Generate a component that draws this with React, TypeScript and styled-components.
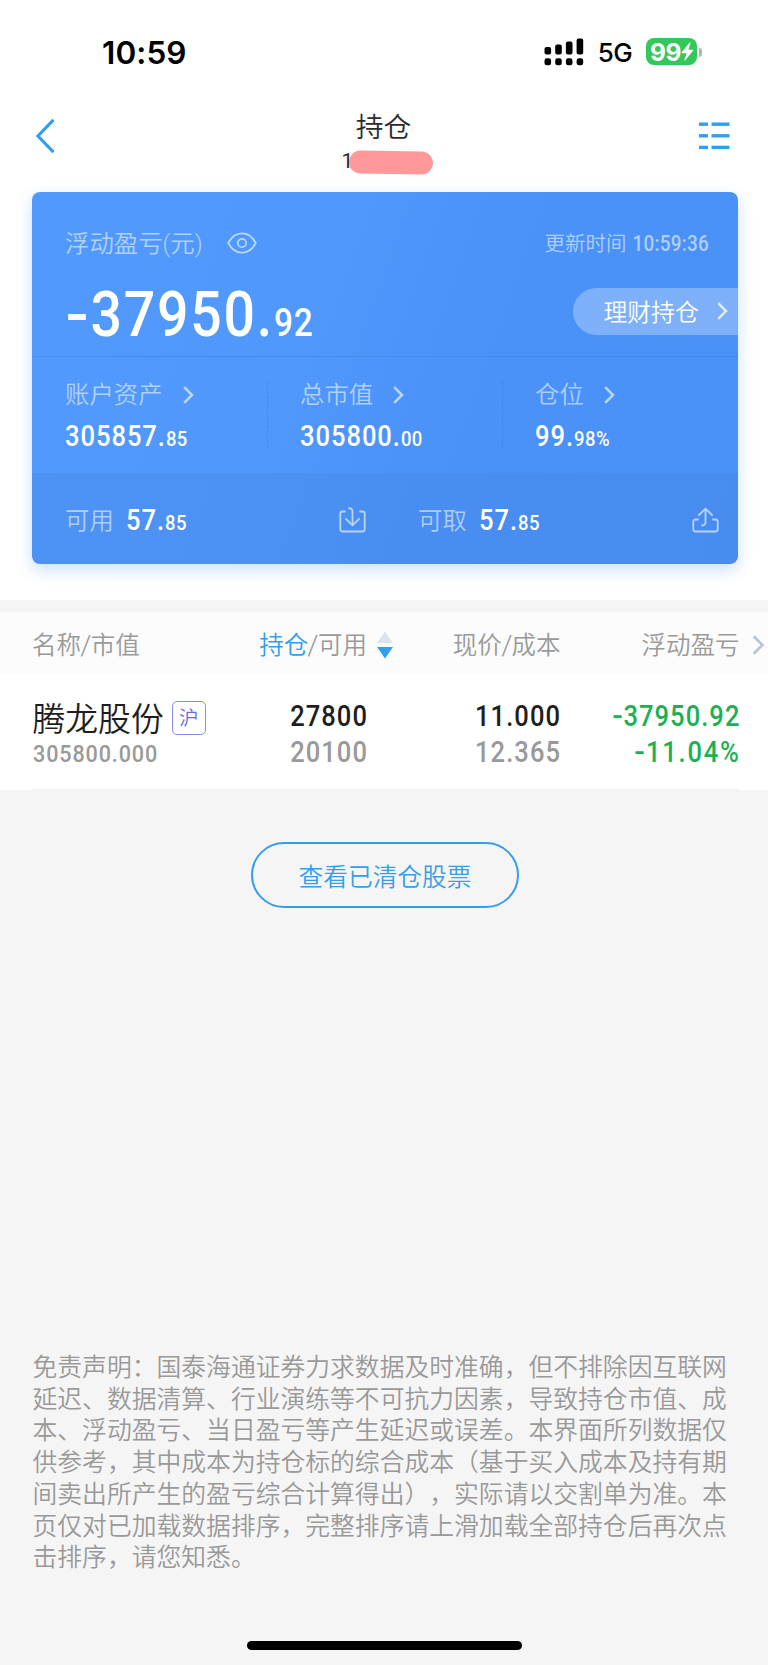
import React from 'react';
import styled, { createGlobalStyle, css } from 'styled-components';

const Global = createGlobalStyle`
  *, *::before, *::after { box-sizing: border-box; }
  body {
    margin: 0;
    background: #f5f5f5;
    font-family: Roboto, "Noto Sans CJK SC", sans-serif;
    font-weight: 350;
    text-spacing-trim: space-all;
  }
  svg { display: block; flex: none; }
`;

/* Narrow, evenly spaced numerals. */
const narrow = (origin: 'left' | 'right') => css`
  font-weight: 500;
  transform: scaleX(0.88);
  transform-origin: ${origin} center;
  white-space: nowrap;
`;

const Screen = styled.main`
  width: 768px;
  height: 1665px;
  display: flex;
  flex-direction: column;
  background: #f5f5f5;
  overflow: hidden;
`;

const Top = styled.section`
  height: 600px;
  flex: none;
  background: #fff;
`;

const StatusBar = styled.header`
  height: 100px;
  display: flex;
  align-items: center;
  padding: 4px 66px 0 102px;
  font-family: Inter, sans-serif;
  color: #000;
`;

const Clock = styled.span`
  flex: 1;
  font-size: 31.5px;
  font-weight: 600;
  letter-spacing: 0.1px;
`;

const Network = styled.span`
  margin: 0 14px 0 14px;
  font-size: 26px;
  font-weight: 450;
  letter-spacing: -0.6px;
`;

const Battery = styled.span`
  width: 51px;
  height: 27px;
  display: flex;
  align-items: center;
  margin-top: -1px;
  padding-left: 4px;
  border-radius: 8px;
  background: #34c759;
  color: #fff;
  font-size: 24.5px;
  font-weight: 700;
  letter-spacing: -0.4px;
`;

const BatteryTip = styled.span`
  width: 3px;
  height: 9px;
  margin-left: 2px;
  border-radius: 0 4px 4px 0;
  background: #b4b4b4;
`;

const NavBar = styled.nav`
  height: 92px;
  display: grid;
  grid-template-columns: 100px 1fr 100px;
  padding: 0 38px 0 36px;
`;

const NavIcon = styled.button<{ $end?: boolean }>`
  height: 71px;
  display: flex;
  align-items: center;
  justify-content: ${(p) => (p.$end ? 'flex-end' : 'flex-start')};
  padding: 0;
  border: 0;
  background: none;
`;

const TitleBlock = styled.div`
  display: flex;
  flex-direction: column;
  align-items: center;
  color: #2b2b2b;
`;

const Title = styled.h1`
  margin: 10px 0 0 1px;
  font-size: 27.8px;
  font-weight: 350;
  line-height: 36px;
`;

const Account = styled.div`
  display: flex;
  align-items: center;
  height: 30px;
  margin-left: 9px;
  font-size: 21px;
  font-weight: 400;
`;

const Redaction = styled.span`
  width: 84px;
  height: 23px;
  margin: 3px 0 0 -4px;
  border-radius: 12px;
  background: #ff9898;
  transform: rotate(0.8deg);
`;

const Card = styled.section`
  width: 705.5px;
  height: 372px;
  margin-left: 32px;
  display: flex;
  flex-direction: column;
  border-radius: 8px;
  overflow: hidden;
  background: linear-gradient(110deg, #5199fd 0%, #5098fc 38%, #4a91f8 62%, #4990f7 100%);
  box-shadow: 0 6px 15px rgba(73, 144, 247, 0.28);
  color: #fff;
`;

const Summary = styled.div`
  height: 165px;
  border-bottom: 1px solid rgba(50, 110, 200, 0.28);
`;

const SummaryHead = styled.div`
  height: 65px;
  display: flex;
  align-items: center;
  padding: 38px 28px 0 33px;
`;

const Label = styled.span`
  font-size: 24.4px;
  line-height: 32px;
  color: rgba(255, 255, 255, 0.56);
  white-space: nowrap;
`;

const EyeSlot = styled.span`
  flex: 1;
  padding: 0 0 1px 24px;
`;

const Updated = styled.span`
  margin-top: 1px;
  font-size: 20.5px;
  line-height: 30px;
  color: rgba(255, 255, 255, 0.58);
  white-space: nowrap;
`;

const UpdatedTime = styled.span`
  display: inline-block;
  margin-left: -9px;
  font-size: 21.5px;
  letter-spacing: 0.3px;
  ${narrow('right')}
`;

const SummaryBody = styled.div`
  display: flex;
  justify-content: space-between;
  align-items: center;
  height: 99px;
  padding: 16px 0 0 32px;
`;

const Figure = styled.span<{ $size: number; $ls: number }>`
  display: inline-block;
  font-size: ${(p) => p.$size}px;
  line-height: 1;
  letter-spacing: ${(p) => p.$ls}px;
  ${narrow('left')}
`;

const Sign = styled.span`
  display: inline-block;
  width: 0.476em;
  letter-spacing: 0;
  text-align: center;
  transform: scaleX(1.23);
`;

const Fraction = styled.small<{ $size: number; $ls: number }>`
  font-size: ${(p) => p.$size}px;
  letter-spacing: ${(p) => p.$ls}px;
`;

const WealthButton = styled.button`
  width: 165px;
  height: 47px;
  display: flex;
  align-items: center;
  justify-content: space-between;
  margin-bottom: 7px;
  padding: 0 10px 0 31px;
  border: 0;
  border-radius: 24px 0 0 24px;
  background: rgba(255, 255, 255, 0.29);
  color: #fff;
  font: 350 23.8px Roboto, "Noto Sans CJK SC", sans-serif;
  span { margin-top: -1px; }
`;

const Stats = styled.div`
  height: 116px;
  display: grid;
  grid-template-columns: 236px 235px 1fr;
  padding-top: 24px;
`;

const Stat = styled.div<{ $divided?: boolean }>`
  height: 67px;
  padding-left: 33px;
  border-right: ${(p) => (p.$divided ? '1px dashed rgba(50, 110, 200, 0.3)' : '0')};
  &:nth-child(n + 2) { padding-left: 32px; }
`;

const StatHead = styled.div`
  height: 28px;
  display: flex;
  align-items: center;
  gap: 20px;
  margin-bottom: 13px;
`;

const Cash = styled.div`
  flex: 1;
  display: grid;
  grid-template-columns: 353px 1fr;
  background: rgba(67, 125, 205, 0.2);
`;

const CashItem = styled.div`
  display: flex;
  align-items: center;
  gap: 12px;
  padding: 4px 19px 0 33px;
  svg { margin: 0 0 2px auto; }
`;

const TableHead = styled.div`
  height: 62px;
  flex: none;
  display: grid;
  grid-template-columns: 259px 108px 193.5px 179px 1fr;
  align-items: center;
  margin-top: 12px;
  background: #fcfcfc;
  color: #999;
  font-size: 24.5px;
  line-height: 32px;
  white-space: nowrap;
  padding-top: 5px;
`;

const HeadCell = styled.span<{ $align?: string }>`
  display: flex;
  align-items: center;
  justify-content: ${(p) => p.$align || 'flex-start'};
  padding-left: ${(p) => (p.$align ? 0 : 32)}px;
  em { font-style: normal; color: #2f9fee; }
`;

const Slash = styled.i`
  font-style: normal;
  transform: scale(1.15);
`;

const SortIcon = styled.svg`
  margin: 0 -26px 2px 10px;
`;

const MoreSlot = styled(HeadCell)`
  padding: 0 3px 2px 0;
`;

const HoldingRow = styled.div`
  height: 116px;
  flex: none;
  display: grid;
  grid-template-columns: 259px 109px 193px 179.5px 1fr;
  padding-top: 24px;
  background: linear-gradient(#f0f0f0, #f0f0f0) 32px 100% / 706px 1px no-repeat #fff;
`;

const NameCell = styled.div`
  padding-left: 32.5px;
`;

const StockName = styled.div`
  height: 40px;
  display: flex;
  align-items: center;
  gap: 8px;
  color: #1e1e1e;
  font-size: 32.8px;
  line-height: 40px;
  white-space: nowrap;
  padding-top: 4px;
`;

const Market = styled.span`
  width: 34px;
  height: 34px;
  margin-top: -4px;
  border: 1px solid #8d8bea;
  border-radius: 5px;
  color: #6b69e0;
  font-size: 19.5px;
  line-height: 33px;
  text-align: center;
`;

const MarketValue = styled.div`
  font-size: 24.5px;
  line-height: 32px;
  letter-spacing: 1px;
  color: #999;
  ${narrow('left')}
`;

const ValueCell = styled.div<{ $color?: string }>`
  text-align: right;
  font-size: 29px;
  line-height: 36px;
  letter-spacing: 1.2px;
  color: ${(p) => p.$color || '#1e1e1e'};
  ${narrow('right')}
`;

const SubValue = styled.div<{ $muted?: boolean; $ls?: number }>`
  letter-spacing: ${(p) => p.$ls ?? 1.2}px;
  color: ${(p) => (p.$muted ? '#999' : 'inherit')};
`;

const ClearedButton = styled.button`
  width: 268px;
  height: 66px;
  flex: none;
  align-self: center;
  margin: 52px 0 0 2px;
  padding: 0;
  border: 2px solid #359eeb;
  border-radius: 33px;
  background: transparent;
  color: #359eeb;
  font: 350 24.7px Roboto, "Noto Sans CJK SC", sans-serif;
`;

const Disclaimer = styled.p`
  margin: auto 0 0 32.5px;
  font-size: 24.8px;
  line-height: 31.7px;
  color: #999;
  white-space: nowrap;
`;

const HomeIndicator = styled.div`
  width: 275px;
  height: 9px;
  flex: none;
  align-self: center;
  margin: 67px 0 15px;
  border-radius: 5px;
  background: #000;
`;

const Signed = ({ text }: { text: string }) =>
  text.startsWith('-') ? <><Sign>-</Sign>{text.slice(1)}</> : <>{text}</>;

const Amount = ({ value, large }: { value: string; large?: boolean }) => {
  const [whole, part] = value.split('.');
  return (
    <Figure $size={large ? 63 : 29} $ls={large ? 2 : 1.1}>
      <Signed text={`${whole}.`} />
      <Fraction $size={large ? 38 : 21} $ls={large ? 0.9 : 0.5}>{part}</Fraction>
    </Figure>
  );
};

const Chevron = ({ color = 'rgba(255,255,255,.62)', w = 11, h = 18 }: { color?: string; w?: number; h?: number }) => (
  <svg width={w} height={h} viewBox="0 0 11 18" fill="none" stroke={color} strokeWidth="2.5">
    <path d="M1.2 1.2 9 9l-7.8 7.8" />
  </svg>
);

const SignalIcon = () => (
  <svg width="40" height="28" viewBox="0 0 40 28">
    <rect x="0.5" y="9" width="6.6" height="7.5" rx="2" />
    <rect x="11.2" y="6.6" width="6.6" height="10" rx="2" />
    <rect x="21.9" y="3.6" width="6.6" height="13" rx="2" />
    <rect x="32.6" y="0.5" width="6.6" height="16" rx="2" />
    {[0.5, 11.2, 21.9, 32.6].map((x) => (
      <rect key={x} x={x} y="20.3" width="6.6" height="7" rx="2.4" />
    ))}
  </svg>
);

const BoltIcon = () => (
  <svg width="13" height="19" viewBox="0 0 13 19" fill="#fff">
    <path d="M8.6.6.6 10.4c-.3.4 0 .8.4.8h4.6L3.4 18c-.2.6.3.8.7.4l8.1-9.8c.3-.4.1-.8-.4-.8H7.4L9.6 1c.1-.6-.6-.8-1-.4z" />
  </svg>
);

const EyeIcon = () => (
  <svg width="30" height="22" viewBox="0 0 30 22" fill="none" stroke="rgba(255,255,255,.62)" strokeWidth="1.7">
    <path d="M1.2 11C4.5 4.8 9 1.3 15 1.3S25.5 4.8 28.8 11C25.5 17.2 21 20.7 15 20.7S4.5 17.2 1.2 11z" strokeLinejoin="round" />
    <circle cx="15" cy="11" r="4.2" />
  </svg>
);

const InIcon = () => (
  <svg width="27" height="26" viewBox="0 0 27 26" fill="none" stroke="rgba(255,255,255,.62)" strokeWidth="1.8" strokeLinecap="round">
    <path d="M6 4.5H3.5a2.2 2.2 0 0 0-2.2 2.2v15.6a2.2 2.2 0 0 0 2.2 2.2h20a2.2 2.2 0 0 0 2.2-2.2V6.7a2.2 2.2 0 0 0-2.2-2.2H21" />
    <path d="M10 1.2c2.2 0 3.5 1.2 3.5 3.500V18M7 12l6.500 6.300L20 12" />
  </svg>
);

const OutIcon = () => (
  <svg width="27" height="26" viewBox="0 0 27 26" fill="none" stroke="rgba(255,255,255,.62)" strokeWidth="1.8" strokeLinecap="round">
    <path d="M6 12.5H3.5a2.2 2.2 0 0 0-2.2 2.2v7.6a2.2 2.2 0 0 0 2.2 2.2h20a2.2 2.2 0 0 0 2.2-2.2v-7.6a2.2 2.2 0 0 0-2.2-2.2H21" />
    <path d="M10 18.5c2.2 0 3.5-1.2 3.5-3.500V1.700M7 8l6.500-6.300L20 8" />
  </svg>
);

const stats = [
  { label: '账户资产', value: '305857.85' },
  { label: '总市值', value: '305800.00' },
  { label: '仓位', value: '99.98%' },
];

const disclaimer = [
  '免责声明：国泰海通证券力求数据及时准确，但不排除因互联网',
  '延迟、数据清算、行业演练等不可抗力因素，导致持仓市值、成',
  '本、浮动盈亏、当日盈亏等产生延迟或误差。本界面所列数据仅',
  '供参考，其中成本为持仓标的综合成本（基于买入成本及持有期',
  '间卖出所产生的盈亏综合计算得出），实际请以交割单为准。本',
  '页仅对已加载数据排序，完整排序请上滑加载全部持仓后再次点',
  '击排序，请您知悉。',
];

export default function App() {
  return (
    <Screen>
      <Global />
      <Top>
        <StatusBar>
          <Clock>10:59</Clock>
          <SignalIcon />
          <Network>5G</Network>
          <Battery>99<BoltIcon /></Battery>
          <BatteryTip />
        </StatusBar>

        <NavBar>
          <NavIcon aria-label="返回">
            <svg width="19" height="34" viewBox="0 0 19 34" fill="none" stroke="#2f9fee" strokeWidth="3.2" strokeLinecap="round">
              <path d="M16.5 1.8 1.9 17l14.6 15.2" />
            </svg>
          </NavIcon>
          <TitleBlock>
            <Title>持仓</Title>
            <Account>1<Redaction /></Account>
          </TitleBlock>
          <NavIcon $end aria-label="菜单">
            <svg width="31" height="28" viewBox="0 0 31 28" fill="#2f9fee">
              {[0.5, 12.1, 23.7].map((y) => (
                <g key={y}>
                  <rect y={y} width="9" height="3.4" />
                  <rect x="12.5" y={y} width="18" height="3.4" />
                </g>
              ))}
            </svg>
          </NavIcon>
        </NavBar>

        <Card>
          <Summary>
            <SummaryHead>
              <Label>浮动盈亏(元)</Label>
              <EyeSlot><EyeIcon /></EyeSlot>
              <Updated>更新时间 <UpdatedTime>10:59:36</UpdatedTime></Updated>
            </SummaryHead>
            <SummaryBody>
              <Amount value="-37950.92" large />
              <WealthButton><span>理财持仓</span><Chevron color="rgba(255,255,255,.75)" /></WealthButton>
            </SummaryBody>
          </Summary>
          <Stats>
            {stats.map((s, i) => (
              <Stat key={s.label} $divided={i < 2}>
                <StatHead><Label>{s.label}</Label><Chevron /></StatHead>
                <Amount value={s.value} />
              </Stat>
            ))}
          </Stats>
          <Cash>
            <CashItem>
              <Label>可用</Label>
              <Amount value="57.85" />
              <InIcon />
            </CashItem>
            <CashItem>
              <Label>可取</Label>
              <Amount value="57.85" />
              <OutIcon />
            </CashItem>
          </Cash>
        </Card>
      </Top>

      <TableHead>
        <HeadCell>名称<Slash>/</Slash>市值</HeadCell>
        <HeadCell $align="flex-end">
          <em>持仓</em><Slash>/</Slash>可用
          <SortIcon width="16" height="28" viewBox="0 0 16 28">
            <path d="M8 0.5 16 12H0z" fill="#dbe4ec" />
            <path d="M8 27.5 16 16H0z" fill="#2f9fee" />
          </SortIcon>
        </HeadCell>
        <HeadCell $align="flex-end">现价<Slash>/</Slash>成本</HeadCell>
        <HeadCell $align="flex-end">浮动盈亏</HeadCell>
        <MoreSlot $align="flex-end"><Chevron color="#b8c6d6" w={13} h={20} /></MoreSlot>
      </TableHead>
      <HoldingRow>
        <NameCell>
          <StockName>腾龙股份<Market>沪</Market></StockName>
          <MarketValue>305800.000</MarketValue>
        </NameCell>
        <ValueCell>27800<SubValue $muted>20100</SubValue></ValueCell>
        <ValueCell>11.000<SubValue $muted>12.365</SubValue></ValueCell>
        <ValueCell $color="#1db053">
          <Signed text="-37950.92" />
          <SubValue $ls={2}><Signed text="-11.04%" /></SubValue>
        </ValueCell>
      </HoldingRow>

      <ClearedButton>查看已清仓股票</ClearedButton>

      <Disclaimer>
        {disclaimer.map((line) => (
          <React.Fragment key={line}>{line}<br /></React.Fragment>
        ))}
      </Disclaimer>
      <HomeIndicator />
    </Screen>
  );
}
